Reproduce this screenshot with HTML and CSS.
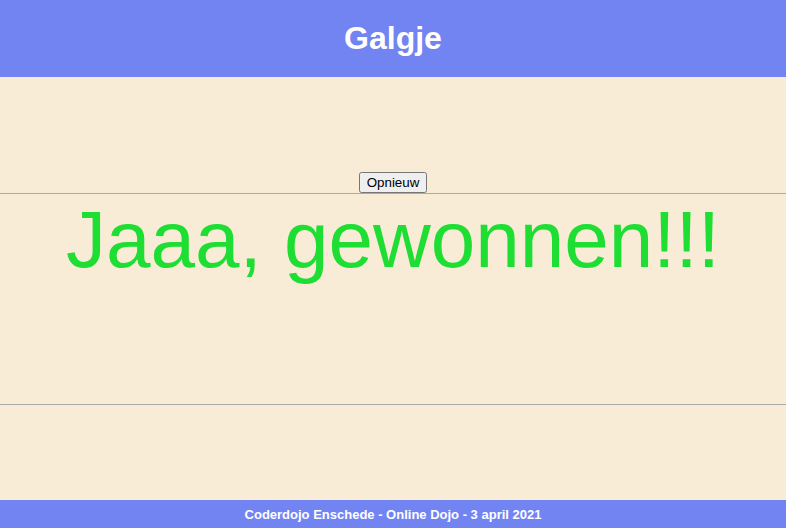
FILE: index.html
```html
<!DOCTYPE html>
<html>
<head>
<meta charset="utf-8">
<link rel="stylesheet" href="styles.css">
</head>
<body>
<header class="top"><h1 class="title">Galgje</h1></header>
<main class="main">
  <div class="controls"><button class="btn">Opnieuw</button></div>
  <section class="board">
    <p class="result">Jaaa, gewonnen!!!</p>
  </section>
</main>
<footer class="foot">Coderdojo Enschede - Online Dojo - 3 april 2021</footer>
</body>
</html>
```
FILE: styles.css
```css
html, body { margin: 0; padding: 0; height: 100%; }
body {
  background: #f8ecd6;
  font-family: "Liberation Sans", Arial, sans-serif;
  display: flex;
  flex-direction: column;
}
.top {
  background: #7284f2;
  height: 77px;
  display: flex;
  align-items: center;
  justify-content: center;
}
.title {
  margin: 0;
  color: #fff;
  font-size: 32px;
  font-weight: bold;
}
.main { flex: 1; }
.controls {
  padding-top: 95px;
  display: flex;
  justify-content: center;
}
.btn {
  font-family: "Liberation Sans", Arial, sans-serif;
  font-size: 13.333px;
  height: 21px;
  padding: 1px 6px;
}
.board {
  border-top: 1px solid #aaa;
  border-bottom: 1px solid #aaa;
  height: 210px;
}
.result {
  margin: 0;
  text-align: center;
  color: #1edd33;
  font-size: 80px;
  line-height: 92px;
}
.foot {
  background: #7284f2;
  color: #fff;
  font-weight: bold;
  font-size: 13px;
  height: 28px;
  line-height: 30px;
  text-align: center;
}
```
